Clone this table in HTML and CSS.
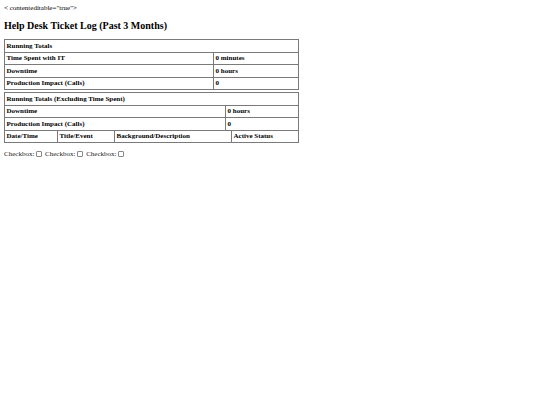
FILE: index.html
```html
<!DOCTYPE html>
<html>
<head>
<meta charset="utf-8">
<link rel="stylesheet" href="styles.css">
</head>
<body>
<div class="pre">&lt; contenteditable="true"&gt;</div>
<h2 class="title">Help Desk Ticket Log (Past 3 Months)</h2>
<table class="log t1">
  <colgroup><col class="c-label"><col></colgroup>
  <tr><th colspan="2">Running Totals</th></tr>
  <tr><th>Time Spent with IT</th><th>0 minutes</th></tr>
  <tr><th>Downtime</th><th>0 hours</th></tr>
  <tr><th>Production Impact (Calls)</th><th>0</th></tr>
</table>
<table class="log t2">
  <colgroup><col class="c-label2"><col></colgroup>
  <tr><th colspan="2">Running Totals (Excluding Time Spent)</th></tr>
  <tr><th>Downtime</th><th>0 hours</th></tr>
  <tr><th>Production Impact (Calls)</th><th>0</th></tr>
</table>
<table class="log t3">
  <colgroup><col class="c-date"><col class="c-title"><col class="c-bg"><col></colgroup>
  <tr><th>Date/Time</th><th>Title/Event</th><th>Background/Description</th><th>Active Status</th></tr>
</table>
<div class="checks">
  <label>Checkbox: <span class="box"></span></label>
  <label>Checkbox: <span class="box"></span></label>
  <label>Checkbox: <span class="box"></span></label>
</div>
</body>
</html>
```
FILE: styles.css
```css
html, body { background: #fff; }
body {
  margin: 4px;
  font-family: "Liberation Serif", "Times New Roman", serif;
  color: #000;
  font-size: 7px;
}
.pre { line-height: 8px; }
.title {
  font-size: 10px;
  font-weight: bold;
  margin: 8px 0 7px;
  line-height: 12px;
}
.log {
  width: 295px;
  border-collapse: collapse;
  font-size: 7px;
  table-layout: fixed;
}
.log th {
  border: 1px solid #7a7a7a;
  text-align: left;
  font-weight: bold;
  height: 11.5px;
  padding: 0 1.5px;
  line-height: 8px;
}
.t2 { margin-top: 2px; }
.t3 th { border-top: 0; }
.c-label { width: 209px; }
.c-label2 { width: 221px; }
.c-date { width: 53px; }
.c-title { width: 57px; }
.c-bg { width: 117px; }
.checks { margin-top: 7px; font-size: 7px; display: flex; gap: 3px; color: #222; }
.box {
  display: inline-block;
  width: 4px; height: 4px;
  border: 1px solid #888;
  border-radius: 1px;
  vertical-align: -0.5px;
}
```
